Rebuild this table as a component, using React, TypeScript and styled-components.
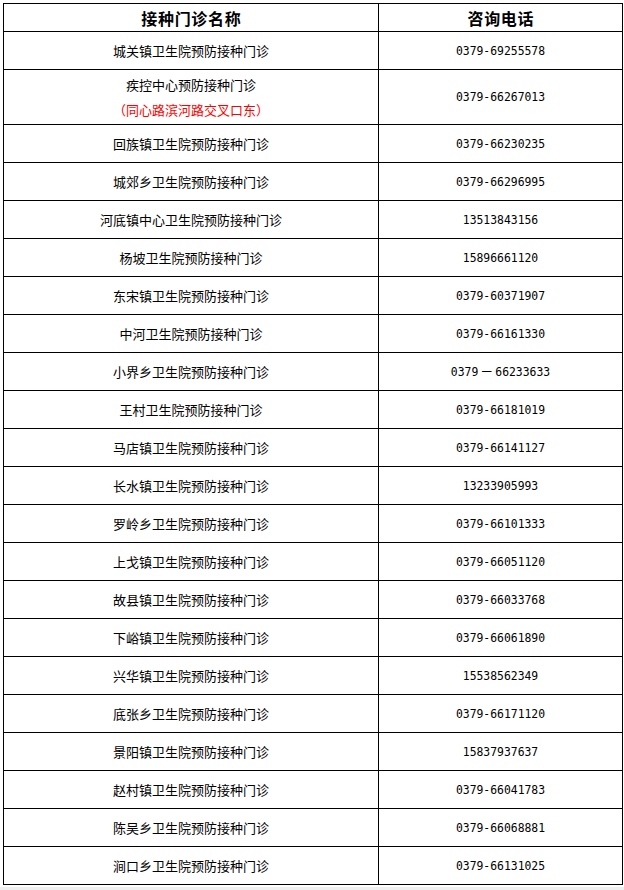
import * as React from 'react';
import styled, { createGlobalStyle } from 'styled-components';

const GlobalStyle = createGlobalStyle`
  html, body {
    margin: 0;
    padding: 0;
    background: #f0f0f0;
  }
`;

const Page = styled.div`
  background: #ffffff;
  width: 624px;
  height: 887px;
  padding: 3px 0 0 3px;
  box-sizing: border-box;
`;

const Table = styled.div`
  display: grid;
  grid-template-columns: 375px 244px;
  width: 620px;
  border-top: 1px solid #000;
  border-left: 1px solid #000;
  box-sizing: border-box;
  color: #000;
`;

const Cell = styled.div<{ $h?: number }>`
  height: ${(p) => p.$h ?? 38}px;
  box-sizing: border-box;
  border-right: 1px solid #000;
  border-bottom: 1px solid #000;
  display: flex;
  flex-direction: column;
  align-items: center;
  justify-content: center;
  text-align: center;
`;

const HeadText = styled.span`
  font-family: "Noto Sans CJK SC", sans-serif;
  font-weight: 700;
  font-size: 16px;
  letter-spacing: 0.7px;
  line-height: 20px;
  padding-left: 0.7px;
`;

const Name = styled.span<{ $red?: boolean }>`
  font-family: "Noto Sans CJK SC", sans-serif;
  font-size: 13px;
  line-height: 25.5px;
  color: ${(p) => (p.$red ? '#ff0000' : '#000')};
`;

const Phone = styled.span`
  font-family: "DejaVu Sans Mono", "Noto Sans CJK SC", monospace;
  font-size: 11.4px;
  line-height: 16px;
`;

const WideDash = styled.span`
  font-family: "Noto Sans CJK SC", sans-serif;
  font-size: 13px;
  margin: 0 2px;
`;

type Clinic = { name: string; note?: string; phone: string; wide?: boolean };

const clinics: Clinic[] = [
  { name: '城关镇卫生院预防接种门诊', phone: '0379-69255578' },
  { name: '疾控中心预防接种门诊', note: '（同心路滨河路交叉口东）', phone: '0379-66267013' },
  { name: '回族镇卫生院预防接种门诊', phone: '0379-66230235' },
  { name: '城郊乡卫生院预防接种门诊', phone: '0379-66296995' },
  { name: '河底镇中心卫生院预防接种门诊', phone: '13513843156' },
  { name: '杨坡卫生院预防接种门诊', phone: '15896661120' },
  { name: '东宋镇卫生院预防接种门诊', phone: '0379-60371907' },
  { name: '中河卫生院预防接种门诊', phone: '0379-66161330' },
  { name: '小界乡卫生院预防接种门诊', phone: '0379-66233633', wide: true },
  { name: '王村卫生院预防接种门诊', phone: '0379-66181019' },
  { name: '马店镇卫生院预防接种门诊', phone: '0379-66141127' },
  { name: '长水镇卫生院预防接种门诊', phone: '13233905993' },
  { name: '罗岭乡卫生院预防接种门诊', phone: '0379-66101333' },
  { name: '上戈镇卫生院预防接种门诊', phone: '0379-66051120' },
  { name: '故县镇卫生院预防接种门诊', phone: '0379-66033768' },
  { name: '下峪镇卫生院预防接种门诊', phone: '0379-66061890' },
  { name: '兴华镇卫生院预防接种门诊', phone: '15538562349' },
  { name: '底张乡卫生院预防接种门诊', phone: '0379-66171120' },
  { name: '景阳镇卫生院预防接种门诊', phone: '15837937637' },
  { name: '赵村镇卫生院预防接种门诊', phone: '0379-66041783' },
  { name: '陈吴乡卫生院预防接种门诊', phone: '0379-66068881' },
  { name: '涧口乡卫生院预防接种门诊', phone: '0379-66131025' },
];

const renderPhone = (c: Clinic) => {
  if (!c.wide) return c.phone;
  const [area, num] = c.phone.split('-');
  return (
    <>
      {area}
      <WideDash>－</WideDash>
      {num}
    </>
  );
};

const App = () => {
  return (
    <Page>
      <GlobalStyle />
      <Table>
        <Cell $h={28}>
          <HeadText>接种门诊名称</HeadText>
        </Cell>
        <Cell $h={28}>
          <HeadText>咨询电话</HeadText>
        </Cell>
        {clinics.map((c) => {
          const h = c.note ? 55 : 38;
          return (
            <React.Fragment key={c.name}>
              <Cell $h={h}>
                <Name>{c.name}</Name>
                {c.note && <Name $red>{c.note}</Name>}
              </Cell>
              <Cell $h={h}>
                <Phone>{renderPhone(c)}</Phone>
              </Cell>
            </React.Fragment>
          );
        })}
      </Table>
    </Page>
  );
};

export default App;
